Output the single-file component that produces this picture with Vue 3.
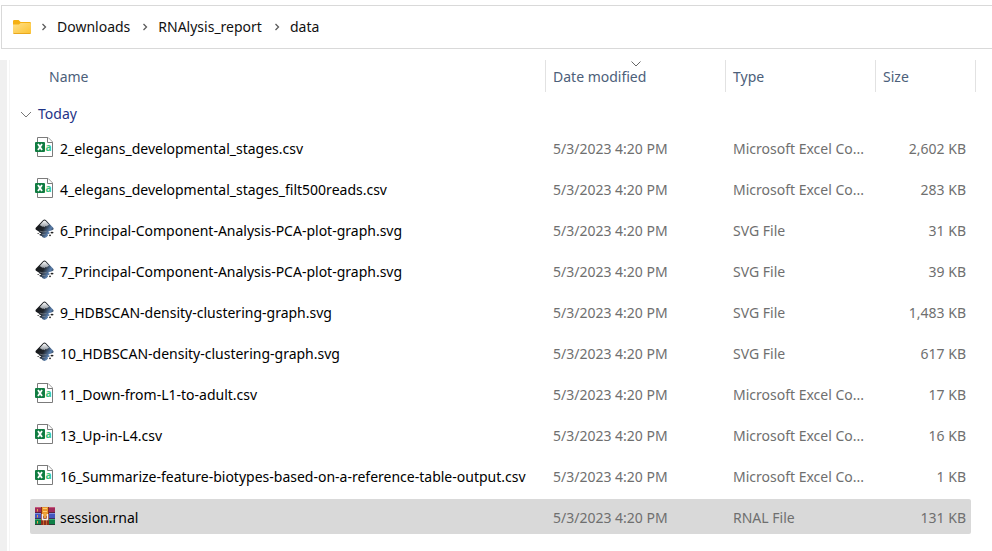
<script setup>
import { ref } from 'vue'

const crumbs = ['Downloads', 'RNAlysis_report', 'data']

const columns = [
  { key: 'name', label: 'Name' },
  { key: 'date', label: 'Date modified', sorted: true },
  { key: 'type', label: 'Type' },
  { key: 'size', label: 'Size' },
]

const date = '5/3/2023 4:20 PM'
const csv = 'Microsoft Excel Co...'
const svg = 'SVG File'

const files = [
  { name: '2_elegans_developmental_stages.csv', type: csv, size: '2,602 KB', icon: 'excel' },
  { name: '4_elegans_developmental_stages_filt500reads.csv', type: csv, size: '283 KB', icon: 'excel' },
  { name: '6_Principal-Component-Analysis-PCA-plot-graph.svg', type: svg, size: '31 KB', icon: 'inkscape' },
  { name: '7_Principal-Component-Analysis-PCA-plot-graph.svg', type: svg, size: '39 KB', icon: 'inkscape' },
  { name: '9_HDBSCAN-density-clustering-graph.svg', type: svg, size: '1,483 KB', icon: 'inkscape' },
  { name: '10_HDBSCAN-density-clustering-graph.svg', type: svg, size: '617 KB', icon: 'inkscape' },
  { name: '11_Down-from-L1-to-adult.csv', type: csv, size: '17 KB', icon: 'excel' },
  { name: '13_Up-in-L4.csv', type: csv, size: '16 KB', icon: 'excel' },
  { name: '16_Summarize-feature-biotypes-based-on-a-reference-table-output.csv', type: csv, size: '1 KB', icon: 'excel' },
  { name: 'session.rnal', type: 'RNAL File', size: '131 KB', icon: 'archive' },
]

const selected = ref('session.rnal')
const open = ref(true)
</script>

<template>
  <div class="explorer">
    <nav class="address" aria-label="Address">
      <svg class="folder" viewBox="0 0 18 14" aria-hidden="true">
        <defs>
          <linearGradient id="folder-front" x1="0" y1="0" x2="1" y2="1">
            <stop offset="0" stop-color="#ffe08a" />
            <stop offset="1" stop-color="#fcc22f" />
          </linearGradient>
        </defs>
        <path d="M0 1.2Q0 0 1.2 0H5.6L7.6 2H16.8Q18 2 18 3.2V8H0Z" fill="#f5b012" />
        <path d="M0 4.6H6L7.6 3H17Q18 3 18 4V12.8Q18 14 16.8 14H1.2Q0 14 0 12.8Z" fill="url(#folder-front)" />
        <path d="M.6 13.5H17.4" stroke="#e9a81e" />
      </svg>
      <ol class="crumbs">
        <li v-for="crumb in crumbs" :key="crumb" class="crumb">
          <svg class="separator" viewBox="0 0 6 8" aria-hidden="true">
            <path d="M1.5 1L4.5 4L1.5 7" />
          </svg>
          <a href="#">{{ crumb }}</a>
        </li>
      </ol>
    </nav>

    <div class="body">
      <div class="rail"></div>
      <main class="pane">
        <table class="files">
          <colgroup>
            <col />
            <col class="col-date" />
            <col class="col-type" />
            <col class="col-size" />
          </colgroup>
          <thead>
            <tr>
              <th v-for="col in columns" :key="col.key" scope="col" :class="col.key" :aria-sort="col.sorted ? 'descending' : undefined">
                <button type="button">{{ col.label }}</button>
                <svg v-if="col.sorted" class="sort" viewBox="0 0 10 6" aria-hidden="true">
                  <path d="M.5 .5L5 5L9.5 .5" />
                </svg>
              </th>
            </tr>
          </thead>
          <tbody>
            <tr class="group">
              <th colspan="4" scope="rowgroup">
                <button type="button" :aria-expanded="open" @click="open = !open">
                  <svg viewBox="0 0 12 7" aria-hidden="true"><path d="M1 1L6 6L11 1" /></svg>
                  Today
                </button>
              </th>
            </tr>
            <template v-if="open">
              <tr
                v-for="file in files"
                :key="file.name"
                class="file"
                :class="{ selected: file.name === selected }"
                @click="selected = file.name"
              >
                <td class="name">
                  <div class="label">
                    <svg v-if="file.icon === 'excel'" class="icon" viewBox="0 0 20 20" aria-hidden="true">
                      <path d="M2.5 .5H13L17.5 5V19.5H2.5Z" fill="#fff" stroke="#7b7b7b" />
                      <path d="M12.5 .5V5.5H17.5" fill="#fff" stroke="#7b7b7b" />
                      <rect y="5" width="10" height="10" rx="1" fill="#107c41" />
                      <path d="M3 7L7 13M7 7L3 13" stroke="#fff" stroke-width="1.8" />
                      <text x="10.6" y="14" class="letter">a</text>
                    </svg>
                    <svg v-else-if="file.icon === 'inkscape'" class="icon" viewBox="0 0 20 20" aria-hidden="true">
                      <defs>
                        <linearGradient id="ink-body" x1="0" y1=".2" x2="1" y2=".8">
                          <stop offset="0" stop-color="#111" />
                          <stop offset=".45" stop-color="#20252c" />
                          <stop offset=".75" stop-color="#5b80ae" />
                          <stop offset="1" stop-color="#111" />
                        </linearGradient>
                        <linearGradient id="ink-snow" x1="0" y1="0" x2="0" y2="1">
                          <stop offset="0" stop-color="#fff" />
                          <stop offset="1" stop-color="#8d949c" />
                        </linearGradient>
                      </defs>
                      <path d="M8 1.2Q9.5 -.2 11 1.2L18 8.4Q19.4 10 17.6 11L14 12.2Q12.6 13 14.6 13.6Q15 14.6 12.6 15.2L13 16.6Q11.4 19 9.4 19Q7.2 18.6 6.6 17Q3.8 16.2 4.6 15.2Q6.8 14.8 6 14.2Q3.8 13.8 3.8 12.6L1.4 11Q-.2 10 1 8.6Z" fill="url(#ink-body)" />
                      <path d="M8.4 2Q9.5 1 10.6 2L14.3 6Q12.8 5.9 12 7.4Q10.6 6.4 9.6 8.2Q8.2 6.8 7.2 7.8Q6.2 6.3 4.6 6.2Z" fill="url(#ink-snow)" />
                      <path d="M4.6 12.1Q8 13.6 11.6 12.5M7 15.4H10.4" fill="none" stroke="#8d949c" stroke-width=".6" />
                      <ellipse cx="17" cy="13.6" rx="1.5" ry=".9" fill="#222" />
                      <ellipse cx="15" cy="16.4" rx="1" ry=".8" fill="#333" />
                      <ellipse cx="3.2" cy="14.4" rx=".8" ry=".5" fill="#444" />
                    </svg>
                    <svg v-else class="icon" viewBox="0 0 20 20" aria-hidden="true">
                      <rect y="1" width="20" height="6" fill="#a02a5a" />
                      <rect y="1" width="20" height="1" fill="#c4587c" />
                      <rect y="7" width="20" height="6" fill="#4456c0" />
                      <rect y="7" width="20" height="1" fill="#7f8fe0" />
                      <rect y="13" width="20" height="6" fill="#0f8048" />
                      <rect y="13" width="20" height="1" fill="#3fb074" />
                      <path d="M0 6.5H20M0 12.5H20M0 18.5H20" stroke="#3b1f36" stroke-opacity=".7" />
                      <path d="M2.5 3V5.5M2.5 9V11.5M2.5 15V17.5" stroke="#e8a04a" />
                      <rect x="6" y="1" width="8" height="18" fill="#8a2f1c" />
                      <rect x="7" y="1" width="6" height="9" fill="#e8962e" />
                      <path d="M8 2.5H12M8 5.5H12" stroke="#ffcf70" />
                      <path d="M8.5 14V19M11.5 14V19" stroke="#c8662c" />
                      <path d="M7.5 8V13.5H12.5V8" fill="none" stroke="#f3f0ea" stroke-width="1.6" />
                      <rect x="9" y="7" width="2" height="5" fill="#f0a63c" />
                    </svg>
                    <span>{{ file.name }}</span>
                  </div>
                </td>
                <td class="date">{{ date }}</td>
                <td class="type">{{ file.type }}</td>
                <td class="size">{{ file.size }}</td>
              </tr>
            </template>
          </tbody>
        </table>
      </main>
    </div>
  </div>
</template>

<style>
body {
  margin: 0;
  background: #fff;
}
</style>

<style scoped>
.explorer {
  display: flex;
  flex-direction: column;
  min-height: 100vh;
  box-sizing: border-box;
  padding-top: 5px;
  font: 14px/20px "Noto Sans", "Open Sans", sans-serif;
  color: #111;
}

.address {
  display: flex;
  align-items: center;
  gap: 10px;
  height: 42px;
  margin-left: 1px;
  padding-left: 11px;
  border: 1px solid #d9d9d9;
  border-right: 0;
}

.folder {
  width: 18px;
  height: 14px;
}

.crumbs {
  display: flex;
  gap: 12px;
  margin: 0;
  padding: 0;
  list-style: none;
}

.crumb {
  display: flex;
  align-items: center;
  gap: 10px;
}

.crumb a {
  color: inherit;
  text-decoration: none;
}

.separator {
  width: 6px;
  height: 8px;
  fill: none;
  stroke: #5c5c5c;
  stroke-width: 1.3;
}

.body {
  display: flex;
  flex: 1;
  margin-top: 11px;
}

.rail {
  width: 7px;
  margin-right: 2px;
  background: #f0f0f0;
}

.pane {
  flex: 1;
  min-width: 0;
  padding: 0 16px 0 10px;
  border-left: 1px solid #f5f5f5;
}

.files {
  width: 100%;
  table-layout: fixed;
  border-collapse: separate;
  border-spacing: 0 6px;
  margin-top: -6px;
}

.col-date {
  width: 180px;
}

.col-type {
  width: 150px;
}

.col-size {
  width: 101px;
}

th,
td {
  box-sizing: border-box;
  padding: 2px 0 0;
  font-weight: 400;
  text-align: left;
  white-space: nowrap;
}

button {
  padding: 0;
  border: 0;
  background: none;
  font: inherit;
  color: inherit;
}

thead th {
  position: relative;
  height: 32px;
  padding-left: 7px;
  border-left: 1px solid #e2e2e2;
  color: #4c607a;
}

thead .name {
  padding-left: 29px;
  border-left: 0;
}

thead .size {
  border-right: 1px solid #e2e2e2;
}

.sort {
  position: absolute;
  top: 1px;
  left: 50%;
  width: 10px;
  height: 6px;
  margin-left: -5px;
  fill: none;
  stroke: #666;
}

.group th {
  height: 26px;
  padding-top: 6px;
  color: #1f3487;
}

.group button {
  display: flex;
  align-items: center;
  gap: 6px;
}

.group svg {
  width: 12px;
  height: 7px;
  fill: none;
  stroke: #777;
}

.file td {
  height: 35px;
  padding-left: 8px;
  background-clip: padding-box;
  color: #6f6f6f;
}

.file .name {
  padding-top: 0;
  padding-left: 5px;
  border-left: 10px solid transparent;
  border-radius: 12px 0 0 12px / 2px 0 0 2px;
  color: #000;
}

.file .size {
  padding-left: 0;
  padding-right: 5px;
  border-right: 5px solid transparent;
  border-radius: 0 7px 7px 0 / 0 2px 2px 0;
  text-align: right;
}

.selected td {
  background-color: #d9d9d9;
}

.label {
  display: flex;
  align-items: flex-start;
  gap: 5px;
}

.label span {
  padding-top: 2px;
}

.icon {
  flex: none;
  width: 20px;
  height: 20px;
}

.letter {
  font: 700 10px "Open Sans", sans-serif;
  fill: #33c481;
}
</style>
